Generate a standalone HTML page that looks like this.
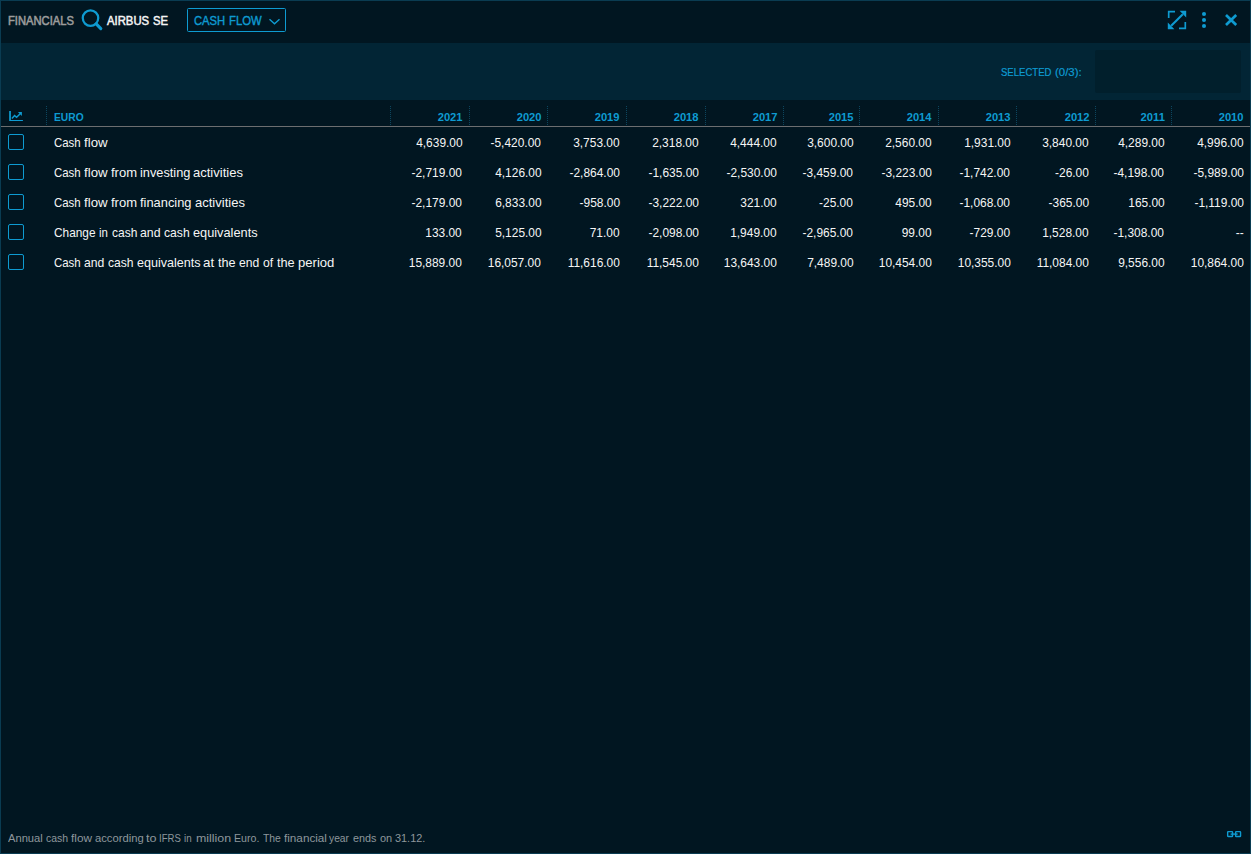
<!DOCTYPE html>
<html><head><meta charset="utf-8">
<style>
*{box-sizing:border-box;margin:0;padding:0}
html,body{width:1251px;height:854px;overflow:hidden;background:#011621;}
body{font-family:"Liberation Sans",sans-serif;color:#fff;position:relative;}
.abs{position:absolute;}
#frame{position:absolute;left:0;top:0;width:1251px;height:854px;border:1px solid #0a3c52;z-index:5}
#band{position:absolute;left:1px;top:43px;width:1249px;height:57px;background:#022535;}
#selbox{position:absolute;left:1095px;top:50px;width:146px;height:43px;background:#011f2c;border-radius:2px;}
.t{position:absolute;white-space:nowrap;line-height:1;transform-origin:0 0;}
.r{position:absolute;white-space:nowrap;line-height:1;transform-origin:100% 0;}
#dd{position:absolute;left:187px;top:8px;width:99px;height:24px;border:1px solid #0e9bd1;border-radius:1.5px;}
.sep{position:absolute;top:106px;height:20px;width:1px;background:repeating-linear-gradient(to bottom,#0c465f 0,#0c465f 1px,transparent 1px,transparent 2px);}
#hline{position:absolute;left:1px;top:126px;width:1249px;height:1px;background:#6c6e70;}
.cb{position:absolute;left:8px;width:16px;height:16px;border:1px solid #0e9bd1;border-radius:2px;}
</style></head><body>
<div id="band"></div>
<div id="selbox"></div>
<div id="frame"></div>
<div id="dd"></div>
<div id="hline"></div>
<div class="sep" style="left:46px"></div><div class="sep" style="left:390px"></div><div class="sep" style="left:469px"></div><div class="sep" style="left:547px"></div><div class="sep" style="left:626px"></div><div class="sep" style="left:705px"></div><div class="sep" style="left:783px"></div><div class="sep" style="left:859px"></div><div class="sep" style="left:938px"></div><div class="sep" style="left:1016px"></div><div class="sep" style="left:1095px"></div><div class="sep" style="left:1171px"></div>
<div class="cb" style="top:134px"></div><div class="cb" style="top:164px"></div><div class="cb" style="top:194px"></div><div class="cb" style="top:224px"></div><div class="cb" style="top:254px"></div>
<svg class="abs" style="left:80px;top:7px" width="24" height="24" viewBox="0 0 24 24"><circle cx="10.5" cy="11.1" r="7.75" fill="none" stroke="#0e9bd1" stroke-width="2.25"/><line x1="16.2" y1="16.9" x2="20.8" y2="21.6" stroke="#0e9bd1" stroke-width="3.1" stroke-linecap="round"/></svg>
<svg class="abs" style="left:267px;top:16px" width="16" height="12" viewBox="0 0 16 12"><polyline points="2.5,3.3 7.5,7.8 12.5,3.3" fill="none" stroke="#0e9bd1" stroke-width="1.4"/></svg>
<svg class="abs" style="left:1167px;top:10px" width="20" height="20" viewBox="0 0 20 20" fill="none" stroke="#0e9bd1" stroke-width="1.7">
<path d="M1.7,8 V1.7 H8 M12,18.3 H18.3 V12"/><path d="M4.2,15.8 L15.8,4.2" stroke-width="2.1"/><path d="M12.6,0.8 H19.2 V7.4 Z M0.8,12.6 V19.2 H7.4 Z" fill="#0e9bd1" stroke="none"/></svg>
<svg class="abs" style="left:1200px;top:10px" width="8" height="20" viewBox="0 0 8 20"><circle cx="4" cy="4" r="2.05" fill="#0e9bd1"/><circle cx="4" cy="10" r="2.05" fill="#0e9bd1"/><circle cx="4" cy="16" r="2.05" fill="#0e9bd1"/></svg>
<svg class="abs" style="left:1223px;top:12px" width="16" height="16" viewBox="0 0 16 16"><path d="M3,3 L13.2,13 M13.2,3 L3,13" stroke="#0e9bd1" stroke-width="2.7" fill="none"/></svg>
<svg class="abs" style="left:9px;top:110px" width="15" height="12" viewBox="0 0 15 12" fill="none" stroke="#0e9bd1"><path d="M0.15,0.9 H1.9 V9.9 H13.9 V11 H0.15 Z" fill="#0e9bd1" stroke="none"/><path d="M2.9,8.6 L5.6,5.6 L7.6,7.2 L11.2,3.7" stroke-width="1.45"/><path d="M8.9,2.1 H12.9 V5.9 Z" fill="#0e9bd1" stroke="none"/></svg>
<svg class="abs" style="left:1226px;top:829px" width="16" height="10" viewBox="0 0 16 10" fill="none" stroke="#0e9bd1" stroke-width="1.4"><rect x="1.65" y="2.65" width="4.9" height="4.9" rx="0.6"/><rect x="9.65" y="2.65" width="4.9" height="4.9" rx="0.6"/><path d="M4.6,5.1 H11.6" /></svg>

<span class="t" style="left:8.12px;top:15.0px;font-size:12.5px;-webkit-text-stroke:0.55px;color:#9c9c9c;transform:scaleX(0.8961)">FINANCIALS</span>
<span class="t" style="left:107.44px;top:15.0px;font-size:12.5px;-webkit-text-stroke:0.5px;color:#f5f5f5;transform:scaleX(0.9044)">AIRBUS</span>
<span class="t" style="left:153.36px;top:15.0px;font-size:12.5px;-webkit-text-stroke:0.5px;color:#f5f5f5;transform:scaleX(0.9013)">SE</span>
<span class="t" style="left:194.10px;top:15.0px;font-size:12.5px;-webkit-text-stroke:0.4px;color:#0e9bd1;transform:scaleX(0.8976)">CASH</span>
<span class="t" style="left:229.06px;top:15.0px;font-size:12.5px;-webkit-text-stroke:0.4px;color:#0e9bd1;transform:scaleX(0.9042)">FLOW</span>
<span class="t" style="left:1001.11px;top:67.0px;font-size:11px;-webkit-text-stroke:0.2px;color:#0e9bd1;transform:scaleX(0.8684)">SELECTED</span>
<span class="t" style="left:1055.08px;top:67.0px;font-size:11px;-webkit-text-stroke:0.2px;color:#0e9bd1;transform:scaleX(1.0389)">(0/3):</span>
<span class="t" style="left:53.76px;top:111.6px;font-size:11.5px;font-weight:bold;color:#0e9bd1;transform:scaleX(0.8922)">EURO</span>
<span class="r" style="right:788.73px;top:112.0px;font-size:11.5px;font-weight:bold;color:#0e9bd1;transform:scaleX(0.9750)">2021</span>
<span class="r" style="right:709.72px;top:112.0px;font-size:11.5px;font-weight:bold;color:#0e9bd1;transform:scaleX(0.9750)">2020</span>
<span class="r" style="right:631.06px;top:112.0px;font-size:11.5px;font-weight:bold;color:#0e9bd1;transform:scaleX(0.9750)">2019</span>
<span class="r" style="right:552.35px;top:112.0px;font-size:11.5px;font-weight:bold;color:#0e9bd1;transform:scaleX(0.9750)">2018</span>
<span class="r" style="right:473.52px;top:112.0px;font-size:11.5px;font-weight:bold;color:#0e9bd1;transform:scaleX(0.9750)">2017</span>
<span class="r" style="right:397.88px;top:112.0px;font-size:11.5px;font-weight:bold;color:#0e9bd1;transform:scaleX(0.9750)">2015</span>
<span class="r" style="right:319.40px;top:112.0px;font-size:11.5px;font-weight:bold;color:#0e9bd1;transform:scaleX(0.9750)">2014</span>
<span class="r" style="right:240.50px;top:112.0px;font-size:11.5px;font-weight:bold;color:#0e9bd1;transform:scaleX(0.9750)">2013</span>
<span class="r" style="right:161.50px;top:112.0px;font-size:11.5px;font-weight:bold;color:#0e9bd1;transform:scaleX(0.9750)">2012</span>
<span class="r" style="right:86.55px;top:112.0px;font-size:11.5px;font-weight:bold;color:#0e9bd1;transform:scaleX(0.9750)">2011</span>
<span class="r" style="right:7.12px;top:112.0px;font-size:11.5px;font-weight:bold;color:#0e9bd1;transform:scaleX(0.9750)">2010</span>
<span class="t" style="left:53.74px;top:136.0px;font-size:13px;color:#f5f5f5;transform:scaleX(0.8777)">Cash</span>
<span class="t" style="left:83.91px;top:136.0px;font-size:13px;color:#f5f5f5;transform:scaleX(1.0202)">flow</span>
<span class="r" style="right:788.66px;top:136.0px;font-size:13px;color:#f5f5f5;transform:scaleX(0.9180)">4,639.00</span>
<span class="r" style="right:710.06px;top:136.0px;font-size:13px;color:#f5f5f5;transform:scaleX(0.9180)">-5,420.00</span>
<span class="r" style="right:631.16px;top:136.0px;font-size:13px;color:#f5f5f5;transform:scaleX(0.9180)">3,753.00</span>
<span class="r" style="right:552.36px;top:136.0px;font-size:13px;color:#f5f5f5;transform:scaleX(0.9180)">2,318.00</span>
<span class="r" style="right:474.16px;top:136.0px;font-size:13px;color:#f5f5f5;transform:scaleX(0.9180)">4,444.00</span>
<span class="r" style="right:397.86px;top:136.0px;font-size:13px;color:#f5f5f5;transform:scaleX(0.9180)">3,600.00</span>
<span class="r" style="right:319.06px;top:136.0px;font-size:13px;color:#f5f5f5;transform:scaleX(0.9180)">2,560.00</span>
<span class="r" style="right:240.56px;top:136.0px;font-size:13px;color:#f5f5f5;transform:scaleX(0.9180)">1,931.00</span>
<span class="r" style="right:162.06px;top:136.0px;font-size:13px;color:#f5f5f5;transform:scaleX(0.9180)">3,840.00</span>
<span class="r" style="right:86.56px;top:136.0px;font-size:13px;color:#f5f5f5;transform:scaleX(0.9180)">4,289.00</span>
<span class="r" style="right:7.26px;top:136.0px;font-size:13px;color:#f5f5f5;transform:scaleX(0.9180)">4,996.00</span>
<span class="t" style="left:53.74px;top:166.0px;font-size:13px;color:#f5f5f5;transform:scaleX(0.8777)">Cash</span>
<span class="t" style="left:83.91px;top:166.0px;font-size:13px;color:#f5f5f5;transform:scaleX(1.0202)">flow</span>
<span class="t" style="left:111.02px;top:166.0px;font-size:13px;color:#f5f5f5;transform:scaleX(1.0031)">from</span>
<span class="t" style="left:140.21px;top:166.0px;font-size:13px;color:#f5f5f5;transform:scaleX(0.9810)">investing</span>
<span class="t" style="left:193.26px;top:166.0px;font-size:13px;color:#f5f5f5;transform:scaleX(1.0010)">activities</span>
<span class="r" style="right:788.86px;top:166.0px;font-size:13px;color:#f5f5f5;transform:scaleX(0.9180)">-2,719.00</span>
<span class="r" style="right:709.86px;top:166.0px;font-size:13px;color:#f5f5f5;transform:scaleX(0.9180)">4,126.00</span>
<span class="r" style="right:631.36px;top:166.0px;font-size:13px;color:#f5f5f5;transform:scaleX(0.9180)">-2,864.00</span>
<span class="r" style="right:552.56px;top:166.0px;font-size:13px;color:#f5f5f5;transform:scaleX(0.9180)">-1,635.00</span>
<span class="r" style="right:474.36px;top:166.0px;font-size:13px;color:#f5f5f5;transform:scaleX(0.9180)">-2,530.00</span>
<span class="r" style="right:398.06px;top:166.0px;font-size:13px;color:#f5f5f5;transform:scaleX(0.9180)">-3,459.00</span>
<span class="r" style="right:319.26px;top:166.0px;font-size:13px;color:#f5f5f5;transform:scaleX(0.9180)">-3,223.00</span>
<span class="r" style="right:240.76px;top:166.0px;font-size:13px;color:#f5f5f5;transform:scaleX(0.9180)">-1,742.00</span>
<span class="r" style="right:162.31px;top:166.0px;font-size:13px;color:#f5f5f5;transform:scaleX(0.9180)">-26.00</span>
<span class="r" style="right:86.76px;top:166.0px;font-size:13px;color:#f5f5f5;transform:scaleX(0.9180)">-4,198.00</span>
<span class="r" style="right:7.46px;top:166.0px;font-size:13px;color:#f5f5f5;transform:scaleX(0.9180)">-5,989.00</span>
<span class="t" style="left:53.74px;top:196.0px;font-size:13px;color:#f5f5f5;transform:scaleX(0.8777)">Cash</span>
<span class="t" style="left:83.91px;top:196.0px;font-size:13px;color:#f5f5f5;transform:scaleX(1.0202)">flow</span>
<span class="t" style="left:111.02px;top:196.0px;font-size:13px;color:#f5f5f5;transform:scaleX(1.0031)">from</span>
<span class="t" style="left:140.22px;top:196.0px;font-size:13px;color:#f5f5f5;transform:scaleX(0.9897)">financing</span>
<span class="t" style="left:194.86px;top:196.0px;font-size:13px;color:#f5f5f5;transform:scaleX(1.0010)">activities</span>
<span class="r" style="right:788.86px;top:196.0px;font-size:13px;color:#f5f5f5;transform:scaleX(0.9180)">-2,179.00</span>
<span class="r" style="right:709.86px;top:196.0px;font-size:13px;color:#f5f5f5;transform:scaleX(0.9180)">6,833.00</span>
<span class="r" style="right:631.21px;top:196.0px;font-size:13px;color:#f5f5f5;transform:scaleX(0.9180)">-958.00</span>
<span class="r" style="right:552.56px;top:196.0px;font-size:13px;color:#f5f5f5;transform:scaleX(0.9180)">-3,222.00</span>
<span class="r" style="right:474.25px;top:196.0px;font-size:13px;color:#f5f5f5;transform:scaleX(0.9180)">321.00</span>
<span class="r" style="right:398.11px;top:196.0px;font-size:13px;color:#f5f5f5;transform:scaleX(0.9180)">-25.00</span>
<span class="r" style="right:319.15px;top:196.0px;font-size:13px;color:#f5f5f5;transform:scaleX(0.9180)">495.00</span>
<span class="r" style="right:240.76px;top:196.0px;font-size:13px;color:#f5f5f5;transform:scaleX(0.9180)">-1,068.00</span>
<span class="r" style="right:162.11px;top:196.0px;font-size:13px;color:#f5f5f5;transform:scaleX(0.9180)">-365.00</span>
<span class="r" style="right:86.65px;top:196.0px;font-size:13px;color:#f5f5f5;transform:scaleX(0.9180)">165.00</span>
<span class="r" style="right:7.43px;top:196.0px;font-size:13px;color:#f5f5f5;transform:scaleX(0.9180)">-1,119.00</span>
<span class="t" style="left:53.72px;top:226.0px;font-size:13px;color:#f5f5f5;transform:scaleX(0.9113)">Change</span>
<span class="t" style="left:99.18px;top:226.0px;font-size:13px;color:#f5f5f5;transform:scaleX(0.8789)">in</span>
<span class="t" style="left:111.74px;top:226.0px;font-size:13px;color:#f5f5f5;transform:scaleX(0.9223)">cash</span>
<span class="t" style="left:140.48px;top:226.0px;font-size:13px;color:#f5f5f5;transform:scaleX(0.9448)">and</span>
<span class="t" style="left:164.33px;top:226.0px;font-size:13px;color:#f5f5f5;transform:scaleX(0.9336)">cash</span>
<span class="t" style="left:193.31px;top:226.0px;font-size:13px;color:#f5f5f5;transform:scaleX(0.9815)">equivalents</span>
<span class="r" style="right:788.75px;top:226.0px;font-size:13px;color:#f5f5f5;transform:scaleX(0.9180)">133.00</span>
<span class="r" style="right:709.86px;top:226.0px;font-size:13px;color:#f5f5f5;transform:scaleX(0.9180)">5,125.00</span>
<span class="r" style="right:631.22px;top:226.0px;font-size:13px;color:#f5f5f5;transform:scaleX(0.9180)">71.00</span>
<span class="r" style="right:552.56px;top:226.0px;font-size:13px;color:#f5f5f5;transform:scaleX(0.9180)">-2,098.00</span>
<span class="r" style="right:474.16px;top:226.0px;font-size:13px;color:#f5f5f5;transform:scaleX(0.9180)">1,949.00</span>
<span class="r" style="right:398.06px;top:226.0px;font-size:13px;color:#f5f5f5;transform:scaleX(0.9180)">-2,965.00</span>
<span class="r" style="right:319.12px;top:226.0px;font-size:13px;color:#f5f5f5;transform:scaleX(0.9180)">99.00</span>
<span class="r" style="right:240.61px;top:226.0px;font-size:13px;color:#f5f5f5;transform:scaleX(0.9180)">-729.00</span>
<span class="r" style="right:162.06px;top:226.0px;font-size:13px;color:#f5f5f5;transform:scaleX(0.9180)">1,528.00</span>
<span class="r" style="right:86.76px;top:226.0px;font-size:13px;color:#f5f5f5;transform:scaleX(0.9180)">-1,308.00</span>
<span class="r" style="right:7.23px;top:226.0px;font-size:13px;color:#f5f5f5;transform:scaleX(0.9180)">--</span>
<span class="t" style="left:53.74px;top:256.0px;font-size:13px;color:#f5f5f5;transform:scaleX(0.8777)">Cash</span>
<span class="t" style="left:83.68px;top:256.0px;font-size:13px;color:#f5f5f5;transform:scaleX(0.9352)">and</span>
<span class="t" style="left:107.63px;top:256.0px;font-size:13px;color:#f5f5f5;transform:scaleX(0.9298)">cash</span>
<span class="t" style="left:136.52px;top:256.0px;font-size:13px;color:#f5f5f5;transform:scaleX(0.9677)">equivalents</span>
<span class="t" style="left:202.54px;top:256.0px;font-size:13px;color:#f5f5f5;transform:scaleX(1.0267)">at</span>
<span class="t" style="left:217.93px;top:256.0px;font-size:13px;color:#f5f5f5;transform:scaleX(0.9723)">the</span>
<span class="t" style="left:238.53px;top:256.0px;font-size:13px;color:#f5f5f5;transform:scaleX(0.9329)">end</span>
<span class="t" style="left:262.93px;top:256.0px;font-size:13px;color:#f5f5f5;transform:scaleX(0.9356)">of</span>
<span class="t" style="left:277.02px;top:256.0px;font-size:13px;color:#f5f5f5;transform:scaleX(0.9781)">the</span>
<span class="t" style="left:297.79px;top:256.0px;font-size:13px;color:#f5f5f5;transform:scaleX(1.0072)">period</span>
<span class="r" style="right:788.68px;top:256.0px;font-size:13px;color:#f5f5f5;transform:scaleX(0.9180)">15,889.00</span>
<span class="r" style="right:709.88px;top:256.0px;font-size:13px;color:#f5f5f5;transform:scaleX(0.9180)">16,057.00</span>
<span class="r" style="right:631.41px;top:256.0px;font-size:13px;color:#f5f5f5;transform:scaleX(0.9180)">11,616.00</span>
<span class="r" style="right:552.61px;top:256.0px;font-size:13px;color:#f5f5f5;transform:scaleX(0.9180)">11,545.00</span>
<span class="r" style="right:474.18px;top:256.0px;font-size:13px;color:#f5f5f5;transform:scaleX(0.9180)">13,643.00</span>
<span class="r" style="right:397.86px;top:256.0px;font-size:13px;color:#f5f5f5;transform:scaleX(0.9180)">7,489.00</span>
<span class="r" style="right:319.08px;top:256.0px;font-size:13px;color:#f5f5f5;transform:scaleX(0.9180)">10,454.00</span>
<span class="r" style="right:240.58px;top:256.0px;font-size:13px;color:#f5f5f5;transform:scaleX(0.9180)">10,355.00</span>
<span class="r" style="right:162.31px;top:256.0px;font-size:13px;color:#f5f5f5;transform:scaleX(0.9180)">11,084.00</span>
<span class="r" style="right:86.56px;top:256.0px;font-size:13px;color:#f5f5f5;transform:scaleX(0.9180)">9,556.00</span>
<span class="r" style="right:7.28px;top:256.0px;font-size:13px;color:#f5f5f5;transform:scaleX(0.9180)">10,864.00</span>
<span class="t" style="left:8.24px;top:833.0px;font-size:11px;color:#8e979c;transform:scaleX(1.0144)">Annual</span>
<span class="t" style="left:45.96px;top:833.0px;font-size:11px;color:#8e979c;transform:scaleX(0.9498)">cash</span>
<span class="t" style="left:70.75px;top:833.0px;font-size:11px;color:#8e979c;transform:scaleX(1.0735)">flow</span>
<span class="t" style="left:94.96px;top:833.0px;font-size:11px;color:#8e979c;transform:scaleX(1.0201)">according</span>
<span class="t" style="left:145.84px;top:833.0px;font-size:11px;color:#8e979c;transform:scaleX(1.1444)">to</span>
<span class="t" style="left:159.29px;top:833.0px;font-size:11px;color:#8e979c;transform:scaleX(0.8694)">IFRS</span>
<span class="t" style="left:184.17px;top:833.0px;font-size:11px;color:#8e979c;transform:scaleX(0.8910)">in</span>
<span class="t" style="left:195.92px;top:833.0px;font-size:11px;color:#8e979c;transform:scaleX(1.1273)">million</span>
<span class="t" style="left:233.79px;top:833.0px;font-size:11px;color:#8e979c;transform:scaleX(0.9661)">Euro.</span>
<span class="t" style="left:263.17px;top:833.0px;font-size:11px;color:#8e979c;transform:scaleX(0.9412)">The</span>
<span class="t" style="left:283.65px;top:833.0px;font-size:11px;color:#8e979c;transform:scaleX(1.0648)">financial</span>
<span class="t" style="left:329.23px;top:833.0px;font-size:11px;color:#8e979c;transform:scaleX(0.9329)">year</span>
<span class="t" style="left:352.75px;top:833.0px;font-size:11px;color:#8e979c;transform:scaleX(0.9818)">ends</span>
<span class="t" style="left:379.54px;top:833.0px;font-size:11px;color:#8e979c;transform:scaleX(0.9982)">on</span>
<span class="t" style="left:395.22px;top:833.0px;font-size:11px;color:#8e979c;transform:scaleX(0.9909)">31.12.</span>
</body></html>
